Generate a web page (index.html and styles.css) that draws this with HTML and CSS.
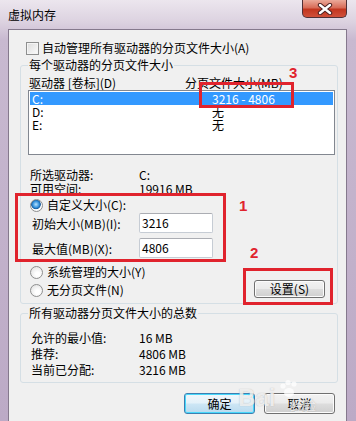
FILE: index.html
```html
<!DOCTYPE html>
<html lang="zh-CN">
<head>
    <meta charset="UTF-8">
    <title>虚拟内存</title>
    <link rel="stylesheet" href="styles.css">
</head>
<body>
    <div class="window">
        <div class="titlebar">
            <span class="title">虚拟内存</span>
            <span class="close">
                <svg width="16" height="12" viewBox="0 0 16 12">
                    <path d="M3 2 L13 10 M13 2 L3 10" stroke="#4a2020" stroke-width="4.4" stroke-linecap="round"/>
                    <path d="M3 2 L13 10 M13 2 L3 10" stroke="#ffffff" stroke-width="2.4" stroke-linecap="round"/>
                </svg>
            </span>
        </div>

        <div class="client">
            <div class="check-row"><span class="checkbox"></span>自动管理所有驱动器的分页文件大小(A)</div>

            <fieldset class="group">
                <legend>每个驱动器的分页文件大小</legend>
                <div class="group-body">
                    <div class="list-head">
                        <span class="head-drive">驱动器 [卷标](D)</span>
                        <span>分页文件大小(MB)</span>
                    </div>
                    <div class="listbox">
                        <div class="list-row selected"><span class="col-drive">C:</span><span>3216 - 4806</span></div>
                        <div class="list-row"><span class="col-drive">D:</span><span>无</span></div>
                        <div class="list-row"><span class="col-drive">E:</span><span>无</span></div>
                    </div>

                    <div class="info-row first"><span class="info-label">所选驱动器:</span><span>C:</span></div>
                    <div class="info-row"><span class="info-label">可用空间:</span><span>19916 MB</span></div>

                    <div class="radio-row custom"><span class="radio checked"></span>自定义大小(C):</div>
                    <div class="field-row"><span class="field-label">初始大小(MB)(I):</span><span class="textbox">3216</span></div>
                    <div class="field-row second"><span class="field-label">最大值(MB)(X):</span><span class="textbox">4806</span></div>

                    <div class="lower">
                        <div class="radios">
                            <div class="radio-row"><span class="radio"></span>系统管理的大小(Y)</div>
                            <div class="radio-row next"><span class="radio"></span>无分页文件(N)</div>
                        </div>
                        <button class="btn btn-set">设置(S)</button>
                    </div>
                </div>
            </fieldset>

            <fieldset class="group group-total">
                <legend>所有驱动器分页文件大小的总数</legend>
                <div class="group-body totals">
                    <div class="total-row"><span class="total-label">允许的最小值:</span><span>16 MB</span></div>
                    <div class="total-row"><span class="total-label">推荐:</span><span>4806 MB</span></div>
                    <div class="total-row"><span class="total-label">当前已分配:</span><span>3216 MB</span></div>
                </div>
            </fieldset>

            <div class="actions">
                <button class="btn btn-default">确定</button>
                <button class="btn">取消</button>
            </div>
        </div>

        <!-- annotations drawn over the dialog -->
        <div class="mark mark-custom"></div>
        <div class="mark mark-set"></div>
        <div class="mark mark-size"></div>
        <span class="mark-num num-1">1</span>
        <span class="mark-num num-2">2</span>
        <span class="mark-num num-3">3</span>

        <div class="watermark">
            <span class="wm-bai">Bai</span>
            <svg class="wm-paw" width="22" height="20" viewBox="0 0 22 20">
                <circle cx="5" cy="7" r="2.6"/>
                <circle cx="10" cy="3.5" r="2.6"/>
                <circle cx="16" cy="5" r="2.6"/>
                <ellipse cx="11" cy="13.5" rx="5" ry="4.5"/>
            </svg>
            <span class="wm-jy">经验</span>
        </div>
    </div>
</body>
</html>
```

FILE: styles.css
```css
body {
    margin: 0;
    padding: 0;
    font-family: "Noto Sans CJK SC", "Noto Sans", sans-serif;
    font-size: 12px;
    color: #000000;
}

.window {
    position: relative;
    width: 356px;
    height: 421px;
    overflow: hidden;
    background: linear-gradient(#ece6ee 0px, #dcd2e0 22px, #c8b9d0 40px, #bcaac6 100%);
}

.titlebar {
    height: 29px;
    display: flex;
    justify-content: space-between;
    align-items: flex-start;
}

.title {
    padding: 8px 0 0 8px;
    line-height: 14px;
}

.close {
    width: 45px;
    height: 18px;
    margin-right: 9px;
    display: flex;
    align-items: center;
    justify-content: center;
    box-sizing: border-box;
    border: 1px solid #4f3036;
    border-top: none;
    border-radius: 0 0 5px 5px;
    background: linear-gradient(#eba999 0%, #d86c58 45%, #c2361f 55%, #d0503a 100%);
}

.client {
    margin-left: 8px;
    width: 339px;
    height: 392px;
    box-sizing: border-box;
    background: #f0f0f0;
    border: 1px solid #85798d;
    border-bottom: none;
    overflow: hidden;
}

.check-row {
    display: flex;
    align-items: center;
    height: 14px;
    line-height: 14px;
    padding: 11px 0 0 17px;
}

.checkbox {
    width: 11px;
    height: 11px;
    margin-right: 3px;
    border: 1px solid #8e8f8f;
    background: linear-gradient(135deg, #dcdcdc, #fbfbfb);
    box-shadow: inset 0 0 0 1px #f4f4f4;
}

.group {
    margin: 3px 8px 0 11px;
    padding: 0;
    border: 1px solid #d5dfe5;
    border-radius: 3px;
    min-inline-size: 0;
}

.group legend {
    margin-left: 7px;
    padding: 0 1px;
    line-height: 14px;
}

.group-body {
    padding: 0 2px 6px 9px;
}

.list-head {
    display: flex;
    margin: 4px 0 0 -1px;
    line-height: 14px;
}

.head-drive {
    width: 156px;
}

.listbox {
    height: 65px;
    box-sizing: border-box;
    margin-left: -2px;
    padding: 1px;
    border: 1px solid #828790;
    background: #ffffff;
}

.list-row {
    display: flex;
    height: 13px;
    line-height: 13px;
    padding-left: 2px;
}

.list-row.selected {
    background: #3399ff;
    color: #ffffff;
}

.col-drive {
    width: 180px;
}

.info-row {
    display: flex;
    line-height: 14px;
}

.info-row.first {
    margin-top: 13px;
}

.info-label {
    width: 109px;
}

.radio-row {
    display: flex;
    align-items: center;
    height: 14px;
    line-height: 14px;
}

.radio-row.custom {
    margin-top: 2px;
}

.radio-row.next {
    margin-top: 4px;
}

.radio {
    width: 11px;
    height: 11px;
    margin-right: 4px;
    border: 1px solid #8e8f8f;
    border-radius: 50%;
    background: radial-gradient(circle at 60% 65%, #ffffff 20%, #dcdcdc 100%);
}

.radio.checked {
    background: radial-gradient(circle at 45% 40%, #b7e3ff 0, #2b8ad8 38%, #1c5e9c 50%, #ffffff 58%, #e4e4e4 100%);
}

.field-row {
    display: flex;
    align-items: center;
    height: 20px;
    margin-top: 1px;
    padding-left: 2px;
}

.field-row.second {
    margin-top: 5px;
}

.field-label {
    width: 107px;
}

.textbox {
    width: 74px;
    height: 20px;
    box-sizing: border-box;
    padding-left: 2px;
    line-height: 18px;
    border: 1px solid #c6ccd4;
    border-top-color: #abadb3;
    border-radius: 2px;
    background: #ffffff;
}

.lower {
    display: flex;
    justify-content: space-between;
    align-items: flex-end;
    margin-top: 7px;
}

.btn {
    width: 71px;
    height: 21px;
    padding: 0;
    font-family: inherit;
    font-size: 12px;
    color: #000000;
    border: 1px solid #707070;
    border-radius: 3px;
    background: linear-gradient(#f2f2f2 0%, #ebebeb 48%, #dddddd 52%, #cfcfcf 100%);
    box-shadow: inset 0 0 0 1px #fcfcfc;
}

.btn-set {
    height: 18px;
    margin: 0 10px -1px 0;
    line-height: 14px;
}

.group-total {
    margin-top: 2px;
}

.totals {
    padding: 10px 2px 4px 10px;
}

.total-row {
    display: flex;
    height: 16px;
    line-height: 16px;
}

.total-label {
    width: 108px;
}

.actions {
    display: flex;
    justify-content: flex-end;
    gap: 9px;
    margin-top: 10px;
    padding-right: 11px;
}

.btn-default {
    border-color: #3c7fb1;
    box-shadow: inset 0 0 0 1px #48d8fb;
    background: linear-gradient(#f0f7fb 0%, #e4f1f9 48%, #cde6f5 52%, #b9daee 100%);
}

.mark {
    position: absolute;
    border: 3px solid #e0232d;
}

.mark-custom {
    left: 15px;
    top: 193px;
    width: 205px;
    height: 63px;
}

.mark-set {
    left: 243px;
    top: 268px;
    width: 84px;
    height: 31px;
}

.mark-size {
    left: 199px;
    top: 82px;
    width: 89px;
    height: 20px;
}

.mark-num {
    position: absolute;
    font-family: "Liberation Sans", Arial, sans-serif;
    font-weight: bold;
    font-size: 15px;
    line-height: 15px;
    color: #e0232d;
}

.num-1 {
    left: 239px;
    top: 198px;
}

.num-2 {
    left: 250px;
    top: 245px;
}

.num-3 {
    left: 289px;
    top: 65px;
}

.watermark {
    position: absolute;
    left: 238px;
    top: 379px;
    width: 100px;
    height: 38px;
    color: rgba(255, 255, 255, 0.75);
    text-shadow: 0 0 1px rgba(120, 120, 120, 0.5);
}

.wm-bai {
    position: absolute;
    left: 0;
    top: 6px;
    font-family: "Liberation Sans", Arial, sans-serif;
    font-weight: bold;
    font-size: 24px;
    line-height: 26px;
}

.wm-paw {
    position: absolute;
    left: 40px;
    top: 0;
    fill: rgba(255, 255, 255, 0.75);
}

.wm-jy {
    position: absolute;
    left: 52px;
    top: 18px;
    font-size: 13px;
    line-height: 16px;
}
```
